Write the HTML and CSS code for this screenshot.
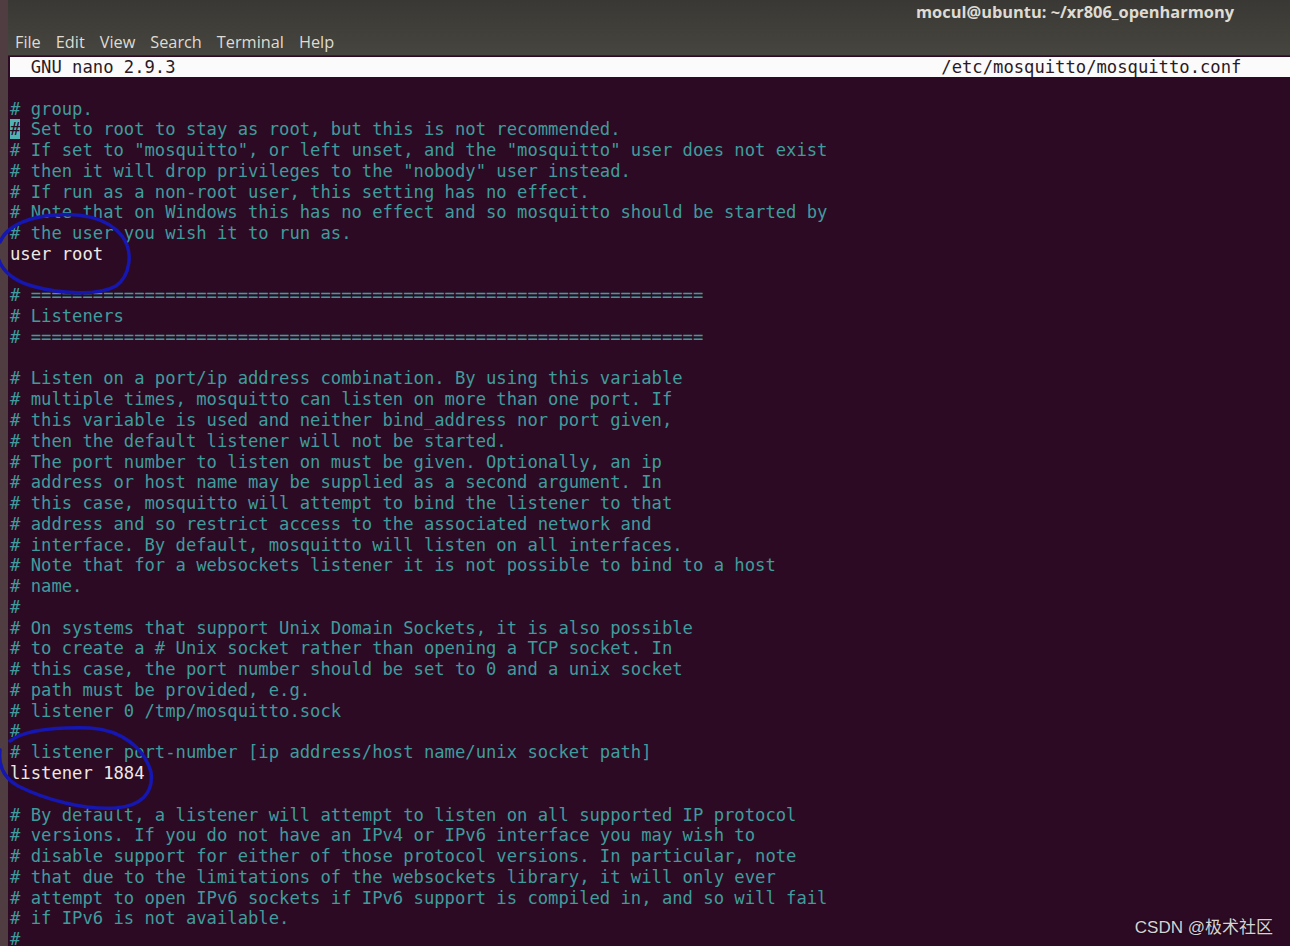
FILE: index.html
```html
<!DOCTYPE html>
<html lang="en">
<head>
  <meta charset="UTF-8">
  <title>mocul@ubuntu: ~/xr806_openharmony</title>
  <link rel="stylesheet" href="styles.css">
</head>
<body>

  <div class="desktop-edge"></div>

  <div class="window">
    <!-- Title and menu -->
    <div class="titlebar">
      <div class="title">mocul@ubuntu: ~/xr806_openharmony</div>
      <div class="menu">
        <span>File</span>
        <span>Edit</span>
        <span>View</span>
        <span>Search</span>
        <span>Terminal</span>
        <span>Help</span>
      </div>
    </div>

    <!-- Terminal running nano -->
    <div class="terminal">
      <pre class="nano-header">  GNU nano 2.9.3                                                                          /etc/mosquitto/mosquitto.conf</pre>
      <div class="blank-row"></div>
<pre class="buffer"><span class="c"># group.</span>
<span class="cursor">#</span><span class="c"> Set to root to stay as root, but this is not recommended.</span>
<span class="c"># If set to "mosquitto", or left unset, and the "mosquitto" user does not exist</span>
<span class="c"># then it will drop privileges to the "nobody" user instead.</span>
<span class="c"># If run as a non-root user, this setting has no effect.</span>
<span class="c"># Note that on Windows this has no effect and so mosquitto should be started by</span>
<span class="c"># the user you wish it to run as.</span>
<span class="n">user root</span>

<span class="c"># =================================================================</span>
<span class="c"># Listeners</span>
<span class="c"># =================================================================</span>

<span class="c"># Listen on a port/ip address combination. By using this variable</span>
<span class="c"># multiple times, mosquitto can listen on more than one port. If</span>
<span class="c"># this variable is used and neither bind_address nor port given,</span>
<span class="c"># then the default listener will not be started.</span>
<span class="c"># The port number to listen on must be given. Optionally, an ip</span>
<span class="c"># address or host name may be supplied as a second argument. In</span>
<span class="c"># this case, mosquitto will attempt to bind the listener to that</span>
<span class="c"># address and so restrict access to the associated network and</span>
<span class="c"># interface. By default, mosquitto will listen on all interfaces.</span>
<span class="c"># Note that for a websockets listener it is not possible to bind to a host</span>
<span class="c"># name.</span>
<span class="c">#</span>
<span class="c"># On systems that support Unix Domain Sockets, it is also possible</span>
<span class="c"># to create a # Unix socket rather than opening a TCP socket. In</span>
<span class="c"># this case, the port number should be set to 0 and a unix socket</span>
<span class="c"># path must be provided, e.g.</span>
<span class="c"># listener 0 /tmp/mosquitto.sock</span>
<span class="c">#</span>
<span class="c"># listener port-number [ip address/host name/unix socket path]</span>
<span class="n">listener 1884</span>

<span class="c"># By default, a listener will attempt to listen on all supported IP protocol</span>
<span class="c"># versions. If you do not have an IPv4 or IPv6 interface you may wish to</span>
<span class="c"># disable support for either of those protocol versions. In particular, note</span>
<span class="c"># that due to the limitations of the websockets library, it will only ever</span>
<span class="c"># attempt to open IPv6 sockets if IPv6 support is compiled in, and so will fail</span>
<span class="c"># if IPv6 is not available.</span>
<span class="c">#</span>
</pre>
    </div>
  </div>

  <!-- Hand-drawn marks over the screenshot -->
  <svg class="marks" width="1290" height="946" viewBox="0 0 1290 946">
    <path d="M 0 242 C 6 228 20 220 45 216 C 80 211 108 218 122 236 C 134 252 130 276 116 286 C 98 296 60 294 32 286 C 12 280 2 270 -2 258" />
    <path d="M 10 741 C 22 732 50 727 90 728 C 122 730 144 748 151 772 C 154 794 140 806 116 808 C 84 810 46 800 18 786 C 4 778 -2 766 0 750" />
  </svg>

  <div class="watermark">CSDN @极术社区</div>

</body>
</html>
```

FILE: styles.css
```css
body {
  margin: 0;
  padding: 0;
  width: 1290px;
  height: 946px;
  overflow: hidden;
  display: flex;
  background-color: #2d0a23;
  position: relative;
}

.desktop-edge {
  width: 8px;
  flex-shrink: 0;
  background-color: #4f3d41;
}

.window {
  flex: 1;
  display: flex;
  flex-direction: column;
  min-width: 0;
}

/* Title bar + menu */
.titlebar {
  height: 55px;
  flex-shrink: 0;
  background: linear-gradient(#393834, #47453f);
  border-bottom: 1px solid #2a2926;
  font-family: "Open Sans", "Noto Sans", sans-serif;
  color: #dfdbd2;
}

.title {
  height: 23px;
  line-height: 23px;
  text-align: right;
  padding-right: 56px;
  font-size: 16.4px;
  font-weight: bold;
}

.menu {
  display: flex;
  gap: 15px;
  padding-left: 7px;
  height: 32px;
  line-height: 38px;
  font-size: 16.3px;
}

/* Terminal */
.terminal {
  flex: 1;
  padding-left: 2px;
  font-family: "DejaVu Sans Mono", monospace;
  font-size: 17.2px;
  line-height: 20.77px;
  overflow: hidden;
}

.terminal pre {
  margin: 0;
  font: inherit;
  white-space: pre;
}

.nano-header {
  background-color: #fbfbfb;
  color: #2b1a26;
  height: 20px;
  line-height: 20px;
  margin-top: 1px !important;
}

.blank-row {
  height: 21.5px;
}

.buffer {
  color: #e6e3df;
}

.c {
  color: #3f9c9d;
}

.n {
  color: #ece9e4;
}

.cursor {
  background-color: #4fb3b3;
  color: #2d0a23;
}

/* Blue circles drawn over the screenshot */
.marks {
  position: absolute;
  left: 0;
  top: 0;
  pointer-events: none;
}

.marks path {
  fill: none;
  stroke: #1616b0;
  stroke-width: 3.5;
  stroke-linecap: round;
}

.watermark {
  position: absolute;
  right: 17px;
  bottom: 8px;
  font-family: "Liberation Sans", "Noto Sans CJK SC", sans-serif;
  font-size: 17px;
  color: #d4d4d4;
  text-shadow: 0 0 2px rgba(0, 0, 0, 0.6);
}
```
